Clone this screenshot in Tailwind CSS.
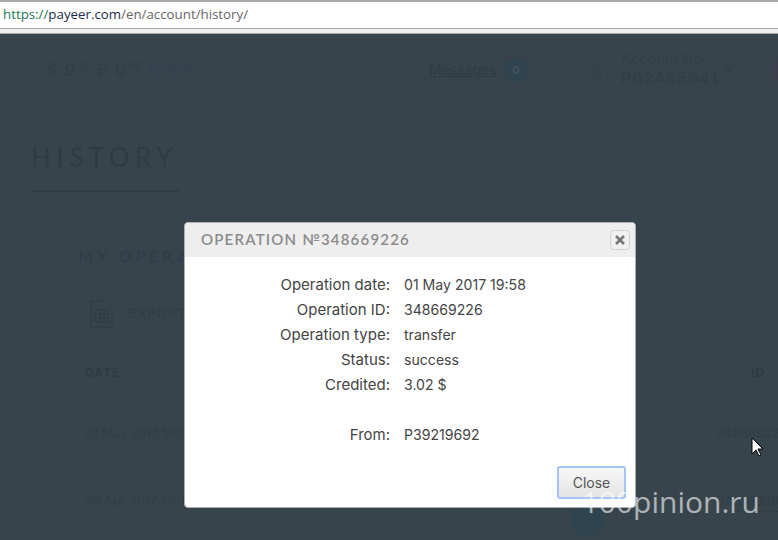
<!DOCTYPE html>
<html lang="en">

<head>
  <meta charset="UTF-8">
  <title>History</title>
  <script src="https://cdn.jsdelivr.net/npm/@tailwindcss/browser@4"></script>
</head>

<body class="relative w-[778px] h-[540px] overflow-hidden bg-[#37444c] font-['Inter',sans-serif]">
  <!-- Address bar -->
  <div class="h-[34px] bg-[#eeeeee] border-b border-[#a8a8a8]">
    <div class="h-[29px] bg-white border-t-2 border-b border-[#a8a8a8] pl-[3px] text-[13.3px] leading-[25px] text-[#666] font-['Open_Sans',sans-serif]">
      <span class="text-[#1a7a4c]">https://</span><span class="text-[#1b2a4a]">payeer.com</span>/en/account/history/
    </div>
  </div>

  <!-- Page behind the overlay -->
  <div class="h-[506px] overflow-hidden text-[#2f3b43]">
    <header class="flex items-start h-[62px] pt-[20px] whitespace-nowrap">
      <div class="flex justify-between shrink-0 w-[145px] ml-[47px] mt-[2px] text-[17px] font-medium leading-[28px] [word-spacing:2px]">
        <span class="text-[#323f47]">$ 9<sup class="text-[10px] -top-[6px] text-[#323f47]">.07</sup></span>
        <span class="text-[#323f47]">₽ 0<sup class="text-[10px] -top-[6px] text-[#323f47]">.00</sup></span>
        <span class="text-[#30434f]">€ 0<sup class="text-[10px] -top-[6px] text-[#30434f]">.00</sup></span>
      </div>
      <a class="shrink-0 w-[67px] ml-[237px] mt-[7px] text-[14px] leading-[18px] underline">Messages</a>
      <span class="shrink-0 ml-[8px] mt-[4px] w-[24px] h-[24px] rounded-full bg-[#2f444f] text-[#44535c] text-[11px] font-bold leading-[24px] text-center">0</span>
      <div class="shrink-0 ml-[53px] mt-[1px] w-[27px] h-[31px] border border-[#34414a] flex items-center justify-center">
        <svg class="w-[18px] h-[18px]" viewBox="0 0 18 18" fill="none" stroke="#34414a"><circle cx="9" cy="6" r="3.5" /><path d="M2 16v-2l5-2h4l5 2v2z" /></svg>
      </div>
      <div class="shrink-0 w-[100px] ml-[13px] -mt-[4px]">
        <div class="text-[14.5px] leading-[18px] text-[#323f47]">Account No.</div>
        <div class="text-[16px] font-bold leading-[20px] tracking-[0.8px] text-[#323f47]">P62485641</div>
      </div>
      <svg class="shrink-0 ml-[2px] mt-[12px] w-[10px] h-[6px]" viewBox="0 0 10 6" fill="none" stroke="#2f3b43" stroke-width="1.2"><path d="M1 1l4 4 4-4" /></svg>
      <span class="shrink-0 ml-[38px] mt-[3px] w-[26px] h-[26px] rounded-full bg-[#3c3f4c]"></span>
    </header>

    <div class="ml-[31px] mt-[46px] w-[147px] h-[50px] border-b-2 border-[#2f3b43] text-[26px] leading-[30px] tracking-[5.5px] font-['Lato',sans-serif]">HISTORY</div>

    <section class="ml-[33px] mt-[36px] w-[800px] border border-[#35424a] h-[320px] pl-[44px] pt-[15px] whitespace-nowrap">
      <h2 class="text-[#2e3e49] text-[16px] font-semibold leading-[24px] tracking-[4px] font-['Lato',sans-serif]">MY OPERATIONS</h2>
      <div class="flex items-center mt-[32px] ml-[12px]">
        <svg class="w-[23px] h-[28px]" viewBox="0 0 23 28" fill="none" stroke="#2f3b43"><path d="M1 1h15l6 6v20H1z" /><path d="M5 10h13v12H5zM5 14h13M5 18h13M10 10v12M14 10v12" /></svg>
        <span class="ml-[15px] text-[13px] font-semibold tracking-[1px] border-b border-dotted border-[#2f3b43] text-[#323f47]">EXPORT</span>
      </div>
      <div class="mt-[14px] -ml-[18px] w-[717px] h-[62px] border border-[#35424a] flex items-center justify-between pl-[24px] pr-[11px] text-[12px] font-bold tracking-[1px]">
        <span>DATE</span>
        <span>ID</span>
      </div>
      <div class="-ml-[18px] w-[733px] mt-[15px] h-[30px] flex justify-between pl-[25px] text-[12.5px] leading-[30px] font-medium text-[#323f47]">
        <span>01 May 2017 19:58</span>
        <span class="font-semibold mr-[5px]">348669226</span>
      </div>
      <div class="-ml-[18px] w-[733px] mt-[37px] h-[30px] flex items-start pl-[25px] text-[12.5px] leading-[30px] font-medium text-[#323f47]">
        <span class="w-[485px]">30 Apr 2017 20:16</span>
        <span class="w-[34px] h-[34px] rounded-full bg-[#2f444f] mt-[17px]"></span>
        <span class="ml-[113px] font-semibold border-b border-dotted border-[#2f3b43] leading-[20px] mt-[5px]">348160000</span>
      </div>
    </section>
  </div>

  <!-- Operation modal -->
  <div class="absolute left-[184px] top-[222px] w-[452px] h-[286px] bg-white rounded-[4px] border border-[#aab0b4] overflow-hidden">
    <div class="h-[34px] bg-[#eeeeee] flex items-center justify-between pl-[16px] pr-[5px]">
      <span class="-mt-[2px] text-[15px] font-['Lato',sans-serif] font-semibold tracking-[1.2px] text-[#8b8b8b]">OPERATION №348669226</span>
      <button class="w-[20px] h-[20px] rounded-[4px] border border-[#d4d4d4] bg-[#f0f0f0] flex items-center justify-center">
        <svg class="w-[10px] h-[10px]" viewBox="0 0 10 10" stroke="#777" stroke-width="2.6"><path d="M1 1l8 8M9 1l-8 8" /></svg>
      </button>
    </div>
    <dl class="grid grid-cols-[205px_1fr] gap-x-[14px] mt-[15px] text-[14.1px] leading-[25px] text-[#444]">
      <dt class="text-right text-[15px]">Operation date:</dt><dd>01 May 2017 19:58</dd>
      <dt class="text-right text-[15px]">Operation ID:</dt><dd>348669226</dd>
      <dt class="text-right text-[15px]">Operation type:</dt><dd>transfer</dd>
      <dt class="text-right text-[15px]">Status:</dt><dd>success</dd>
      <dt class="text-right text-[15px]">Credited:</dt><dd>3.02 $</dd>
      <dt class="text-right text-[15px] mt-[25px]">From:</dt><dd class="mt-[25px]">P39219692</dd>
    </dl>
    <button class="absolute right-[9px] bottom-[8px] w-[69px] h-[33px] rounded-[3px] border-2 border-[#a3c4f5] bg-gradient-to-b from-[#f8f8f8] to-[#e4e4e4] text-[14px] text-[#555]">Close</button>
  </div>

  <!-- Watermark -->
  <div class="absolute right-[18px] top-[484px] text-[30px] leading-[36px] text-white/60 font-['Open_Sans',sans-serif]">100pinion.ru</div>

  <!-- Mouse cursor -->
  <svg class="absolute left-[751px] top-[437px] w-[14px] h-[20px]" viewBox="0 0 14 20"><path d="M1 1v16l4-4 3 6 2-1-3-6h5z" fill="#fff" stroke="#000" /></svg>
</body>

</html>
